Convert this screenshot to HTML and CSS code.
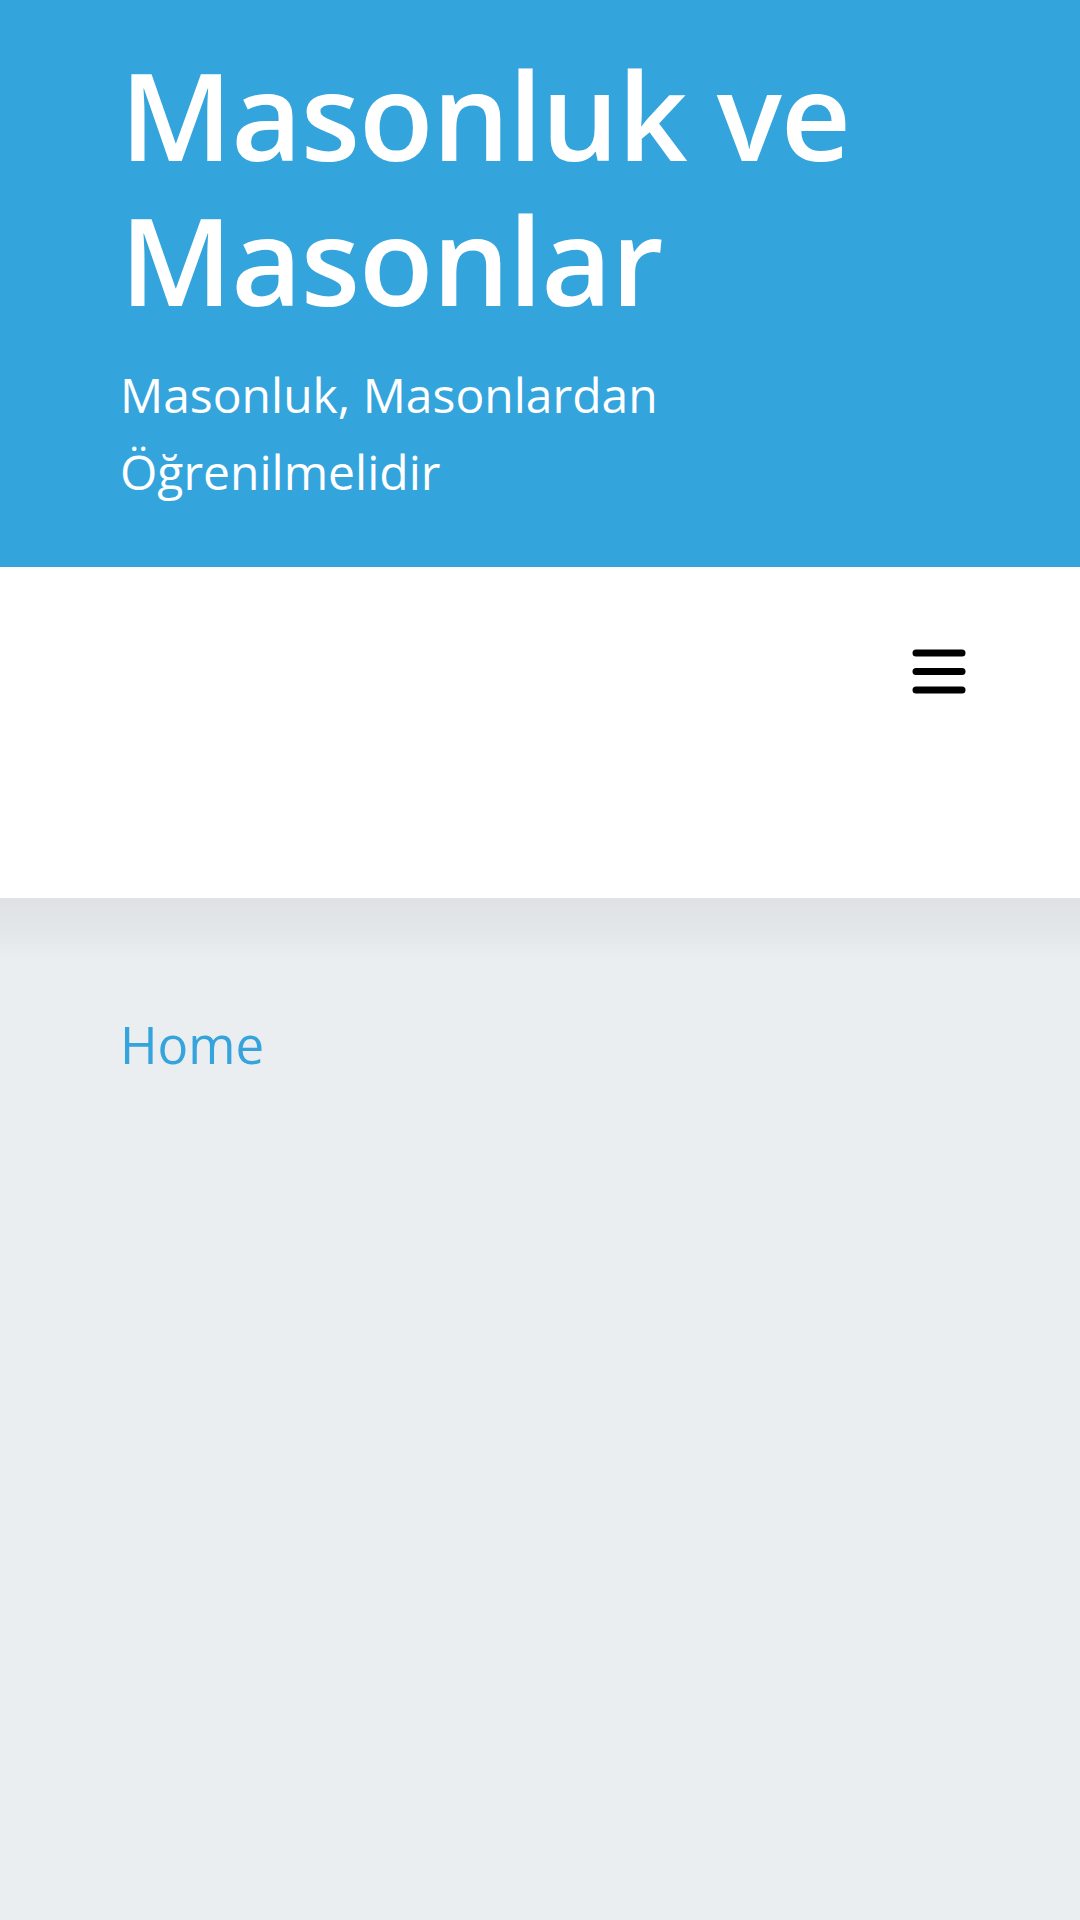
FILE: index.html
```html
<!DOCTYPE html>
<html lang="tr">
<head>
    <meta charset="UTF-8">
    <meta name="viewport" content="width=device-width, initial-scale=1.0">
    <title>Masonluk ve Masonlar</title>
    <link rel="stylesheet" href="styles.css">
</head>
<body>
    <header class="site-header">
        <h1 class="site-title">Masonluk ve Masonlar</h1>
        <p class="site-tagline">Masonluk, Masonlardan Öğrenilmelidir</p>
    </header>

    <nav class="main-nav">
        <span class="menu-button" aria-label="Menü">
            <svg width="54" height="46" viewBox="0 0 54 46">
                <g stroke="#000" stroke-width="7" stroke-linecap="round">
                    <line x1="4" y1="4" x2="50" y2="4" />
                    <line x1="4" y1="22.5" x2="50" y2="22.5" />
                    <line x1="4" y1="41" x2="50" y2="41" />
                </g>
            </svg>
        </span>
    </nav>

    <main class="content">
        <a href="#" class="crumb">Home</a>
    </main>
</body>
</html>
```

FILE: styles.css
```css
/* Styles globaux */
body {
    margin: 0;
    padding: 0;
    font-family: "Open Sans", "Noto Sans", Arial, sans-serif;
    background-color: #ebeef1;
    min-height: 1920px;
    display: flex;
    flex-direction: column;
}

/* En-tête bleu */
.site-header {
    background-color: #34a4dd;
    color: #fff;
    padding: 42px 120px 57px;
}

.site-title {
    margin: 0;
    font-size: 122px;
    font-weight: 600;
    line-height: 145px;
    letter-spacing: -1.2px;
}

.site-tagline {
    margin: 24px 0 0;
    font-size: 48px;
    font-weight: 400;
    line-height: 77px;
    width: 700px;
}

/* Barre de navigation */
.main-nav {
    background-color: #fff;
    height: 331px;
    display: flex;
    justify-content: flex-end;
    align-items: flex-start;
    padding: 82px 114px 0;
    box-sizing: border-box;
}

.menu-button {
    display: block;
    cursor: pointer;
}

.menu-button svg {
    display: block;
}

/* Contenu principal */
.content {
    flex: 1;
    padding: 116px 120px 0;
    background: linear-gradient(to bottom, #dfe2e5 0, #e5e8eb 40px, #ebeef1 60px, #ebeef1 100%);
}

.crumb {
    display: inline-block;
    color: #35a3dc;
    text-decoration: none;
    font-size: 51px;
    line-height: 60px;
}
```
